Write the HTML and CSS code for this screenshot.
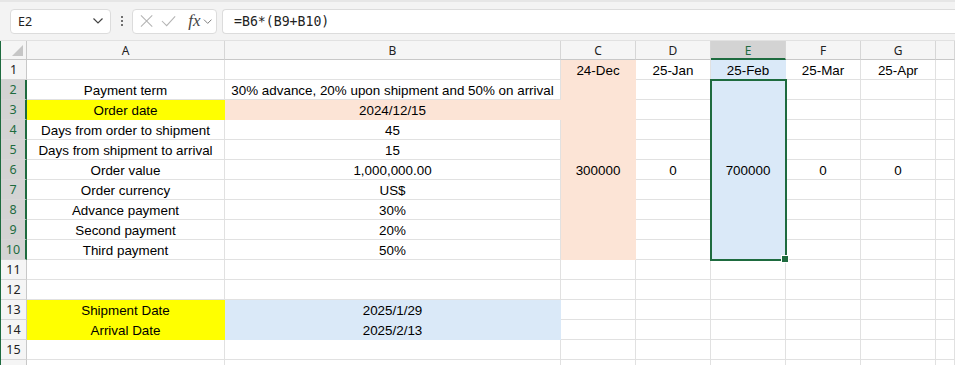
FILE: index.html
```html
<!DOCTYPE html>
<html>
<head>
<meta charset="utf-8">
<link rel="stylesheet" href="styles.css">
</head>
<body>
<div class="app">
  <div class="topbar">
    <div class="namebox">
      <span class="nb-text">E2</span>
      <svg class="nb-chev" width="12" height="8" viewBox="0 0 12 8"><path d="M1.5 1.5 L6 6 L10.5 1.5" fill="none" stroke="#444" stroke-width="1.2"/></svg>
    </div>
    <div class="kebab"><span></span><span></span><span></span></div>
    <div class="fxbox">
      <svg width="14" height="14" viewBox="0 0 14 14"><path d="M1 1 L13 13 M13 1 L1 13" stroke="#b4b4b4" stroke-width="1.1" fill="none"/></svg>
      <svg width="16" height="14" viewBox="0 0 16 14"><path d="M1 7 L6 12 L15 2" stroke="#b4b4b4" stroke-width="1.1" fill="none"/></svg>
      <span class="fx">fx</span>
      <svg width="10" height="7" viewBox="0 0 10 7"><path d="M1 1.5 L5 5.5 L9 1.5" fill="none" stroke="#777" stroke-width="1"/></svg>
    </div>
    <div class="formula">=B6*(B9+B10)</div>
  </div>

  <div class="sheet">
    <div class="grid" id="grid"></div>
    <div class="selection"><div class="handle"></div></div>
  </div>
</div>
<script src="app.js"></script>
</body>
</html>
```

FILE: app.js
```js
const cols = ['A','B','C','D','E','F','G',''];
const rows = {
  1: {C:'24-Dec', D:'25-Jan', E:'25-Feb', F:'25-Mar', G:'25-Apr'},
  2: {A:'Payment term', B:'30% advance, 20% upon shipment and 50% on arrival'},
  3: {A:'Order date', B:'2024/12/15'},
  4: {A:'Days from order to shipment', B:'45'},
  5: {A:'Days from shipment to arrival', B:'15'},
  6: {A:'Order value', B:'1,000,000.00', C:'300000', D:'0', E:'700000', F:'0', G:'0'},
  7: {A:'Order currency', B:'US$'},
  8: {A:'Advance payment', B:'30%'},
  9: {A:'Second payment', B:'20%'},
  10: {A:'Third payment', B:'50%'},
  13: {A:'Shipment Date', B:'2025/1/29'},
  14: {A:'Arrival Date', B:'2025/2/13'}
};
function fill(r, c) {
  if (c === 'C' && r <= 10) return 'peach';
  if (c === 'E' && r <= 10) return 'blue';
  if (c === 'B' && r === 3) return 'peach';
  if (c === 'A' && (r === 3 || r === 13 || r === 14)) return 'yellow';
  if (c === 'B' && (r === 13 || r === 14)) return 'blue';
  return '';
}
const g = document.getElementById('grid');
let html = '<div class="corner"><span class="tri"></span></div>';
cols.forEach(c => {
  html += '<div class="colhead' + (c === 'E' ? ' sel' : '') + '">' + c + '</div>';
});
for (let r = 1; r <= 16; r++) {
  const sel = r >= 2 && r <= 10;
  html += '<div class="rowhead' + (sel ? ' sel' : '') + '">' + (r <= 15 ? r : '') + '</div>';
  cols.forEach(c => {
    const v = (rows[r] && rows[r][c]) || '';
    const f = fill(r, c);
    html += '<div class="cell' + (f ? ' ' + f : '') + '">' + v + '</div>';
  });
}
g.innerHTML = html;
```

FILE: styles.css
```css
html, body {
  margin: 0;
  padding: 0;
  background: #fff;
  overflow: hidden;
}
.app {
  width: 955px;
  height: 365px;
  overflow: hidden;
  position: relative;
}
.topbar {
  height: 41px;
  box-sizing: border-box;
  background: #f3f3f3;
  border-top: 2px solid #e6e6e6;
  border-bottom: 1px solid #e1e1e1;
  display: flex;
  align-items: center;
  padding-left: 10px;
}
.namebox {
  width: 101px;
  height: 25px;
  box-sizing: border-box;
  background: #fff;
  border: 1px solid #dcdcdc;
  border-radius: 4px;
  display: flex;
  align-items: center;
  justify-content: space-between;
  padding: 0 6px 0 7px;
  font-family: "Noto Sans", "Liberation Sans", sans-serif;
  font-size: 12.5px;
  color: #222;
}
.kebab {
  width: 21px;
  height: 25px;
  display: flex;
  flex-direction: column;
  align-items: center;
  justify-content: center;
  gap: 2px;
}
.kebab span {
  width: 2px;
  height: 2px;
  background: #444;
  border-radius: 1px;
}
.fxbox {
  width: 85px;
  height: 25px;
  box-sizing: border-box;
  background: #fff;
  border: 1px solid #dcdcdc;
  border-radius: 4px;
  display: flex;
  align-items: center;
  padding: 0 4px 0 7px;
  gap: 8px;
}
.fx {
  font-family: "Liberation Serif", "DejaVu Serif", serif;
  font-style: italic;
  font-size: 17px;
  color: #444;
  margin-left: 4px;
  margin-right: -6px;
}
.formula {
  flex: 1;
  margin-left: 5px;
  height: 25px;
  box-sizing: border-box;
  background: #fff;
  border: 1px solid #dcdcdc;
  border-right: none;
  border-radius: 4px 0 0 4px;
  padding-left: 11px;
  display: flex;
  align-items: center;
  font-family: "DejaVu Sans Mono", "Liberation Mono", monospace;
  font-size: 13.2px;
  color: #222;
}
.sheet {
  position: relative;
  border-left: 1px solid #1e6b3f;
}
.grid {
  display: grid;
  grid-template-columns: 26px 198px 336px 75px 75px 75px 75px 75px 1fr;
  grid-template-rows: 19px repeat(16, 20px);
}
.corner {
  background: #f5f5f5;
  border-right: 1px solid #c8c8c8;
  border-bottom: 1px solid #c8c8c8;
  box-sizing: border-box;
  position: relative;
}
.tri {
  position: absolute;
  right: 3px;
  bottom: 3px;
  width: 0;
  height: 0;
  border-left: 11px solid transparent;
  border-bottom: 11px solid #c6c6c6;
}
.colhead {
  background: #f5f5f5;
  box-sizing: border-box;
  border-right: 1px solid #d6d6d6;
  border-bottom: 1px solid #c8c8c8;
  font-family: "Noto Sans", "Liberation Sans", sans-serif;
  font-size: 12px;
  color: #222;
  text-align: center;
  line-height: 19px;
}
.colhead.sel {
  background: #d3d3d3;
  color: #1e6b3f;
  border-bottom: 2px solid #1e6b3f;
}
.rowhead {
  background: #f5f5f5;
  box-sizing: border-box;
  border-right: 1px solid #c8c8c8;
  border-bottom: 1px solid #d6d6d6;
  font-family: "Noto Sans", "Liberation Sans", sans-serif;
  font-size: 12.5px;
  color: #222;
  text-align: center;
  line-height: 20px;
}
.rowhead.sel {
  background: #d3d3d3;
  color: #1e6b3f;
  border-right: 2px solid #1e6b3f;
}
.cell {
  box-sizing: border-box;
  border-right: 1px solid #e1e1e1;
  border-bottom: 1px solid #e1e1e1;
  font-family: "Liberation Sans", Arial, sans-serif;
  font-size: 13.4px;
  color: #000;
  text-align: center;
  padding-top: 1px;
  line-height: 19px;
  white-space: nowrap;
  overflow: hidden;
}
.cell.peach { background: #fce4d6; border-color: #fce4d6; }
.cell.blue { background: #dae9f8; border-color: #dae9f8; }
.cell.yellow { background: #ffff00; border-color: #ffff00; }
.selection {
  position: absolute;
  left: 709px;
  top: 38px;
  width: 77px;
  height: 182px;
  box-sizing: border-box;
  border: 2px solid #1e6b3f;
  pointer-events: none;
}
.handle {
  position: absolute;
  right: -4px;
  bottom: -4px;
  width: 6px;
  height: 6px;
  background: #1e6b3f;
  border: 1px solid #fff;
}
```
